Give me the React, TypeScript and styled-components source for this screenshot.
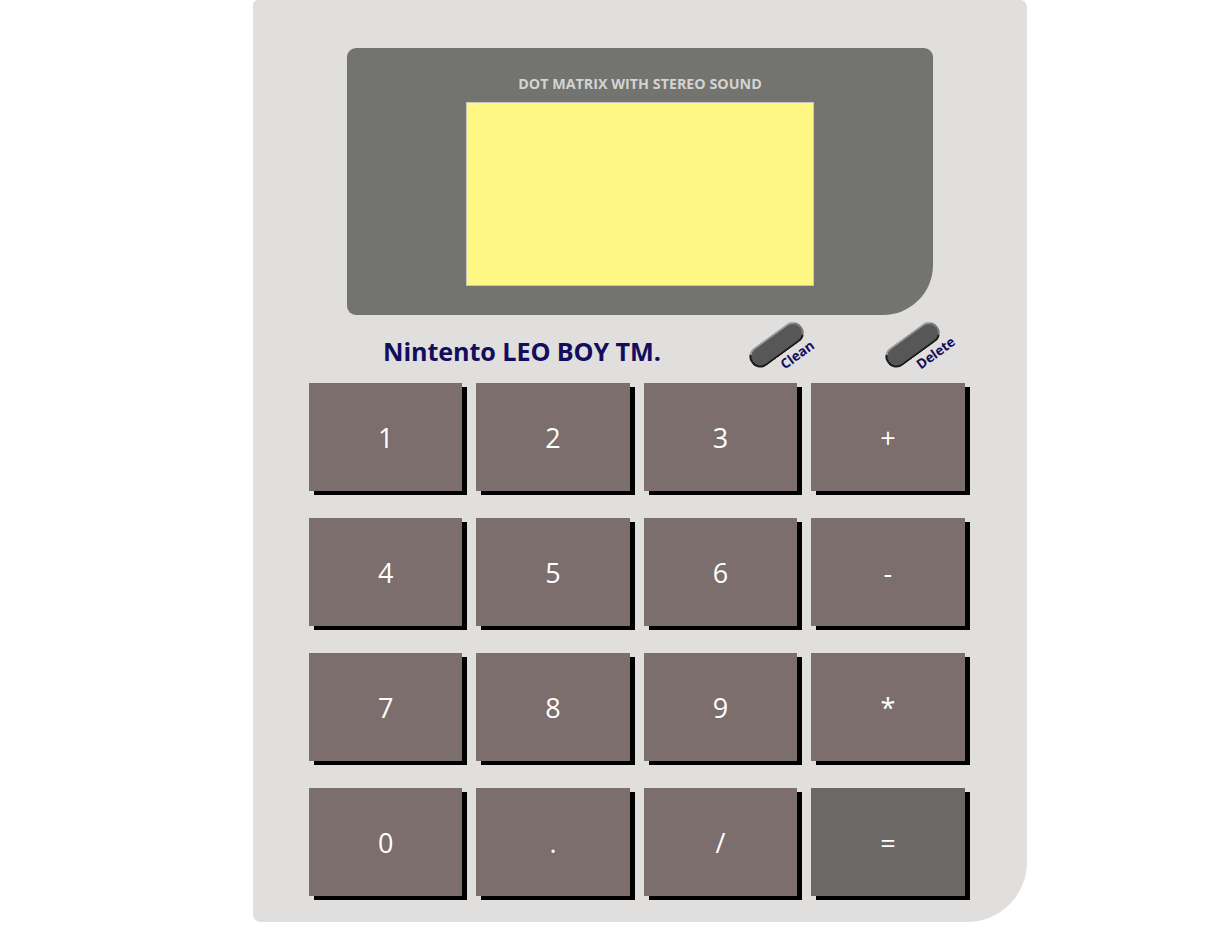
import React from "react";
import styled, { createGlobalStyle } from "styled-components";

const Global = createGlobalStyle`
  html, body { margin: 0; padding: 0; background: #ffffff; }
  body { font-family: "Open Sans", "DejaVu Sans", sans-serif; }
`;

const Device = styled.div`
  margin-left: 253px;
  width: 774px;
  height: 922px;
  box-sizing: border-box;
  background: #e0dfdd;
  border-radius: 5px 7px 60px 8px;
  padding-top: 48px;
  display: flex;
  flex-direction: column;
`;

const ScreenFrame = styled.div`
  margin-left: 94px;
  width: 586px;
  height: 267px;
  box-sizing: border-box;
  background: #737370;
  border-radius: 9px 9px 50px 9px;
  display: flex;
  flex-direction: column;
  align-items: center;
  padding-top: 27px;
`;

const ScreenTitle = styled.div`
  font-family: "Open Sans", sans-serif;
  font-weight: 700;
  font-size: 14.3px;
  line-height: 18px;
  color: #d3d3d1;
`;

const Lcd = styled.div`
  margin-top: 9px;
  width: 348px;
  height: 184px;
  box-sizing: border-box;
  background: #fef783;
  border: 1px solid #c9c7c0;
`;

const ControlRow = styled.div`
  height: 68px;
  display: flex;
  align-items: flex-start;
  padding-left: 130px;
`;

const Brand = styled.div`
  margin-top: 20px;
  font-family: "Open Sans", sans-serif;
  font-weight: 700;
  font-size: 25.2px;
  line-height: 32px;
  color: #130d5e;
  letter-spacing: -0.1px;
  width: 362px;
`;

const Switch = styled.div<{ $gap: number }>`
  margin-top: 19px;
  margin-left: ${(p) => p.$gap}px;
  display: flex;
  flex-direction: column;
  align-items: flex-start;
  transform: rotate(-36deg);
  transform-origin: 31px 10px;
`;

const Pill = styled.div`
  width: 58px;
  height: 18px;
  background: #575757;
  border: 2px solid #1c1c1c;
  border-top-color: #9a9a9a;
  border-right-color: #7a7a7a;
  border-radius: 11px;
`;

const SwitchLabel = styled.div<{ $shift: number }>`
  margin-top: 2px;
  margin-left: ${(p) => p.$shift}px;
  font-family: "Open Sans", sans-serif;
  font-weight: 700;
  font-size: 13.5px;
  line-height: 15px;
  color: #130d5e;
`;

const Keypad = styled.div`
  margin-left: 56px;
  display: grid;
  grid-template-columns: repeat(4, 153.4px);
  grid-auto-rows: 108px;
  column-gap: 14px;
  row-gap: 27px;
`;

const Key = styled.button<{ $dark?: boolean }>`
  border: none;
  margin: 0;
  padding: 0;
  background: ${(p) => (p.$dark ? "#6b6866" : "#7b6e6d")};
  box-shadow: 5px 4px 0 #000000;
  color: #ffffff;
  font-family: "Open Sans", sans-serif;
  font-size: 27px;
  font-weight: 400;
  display: flex;
  align-items: center;
  justify-content: center;
  cursor: pointer;
`;

const keys = ["1", "2", "3", "+", "4", "5", "6", "-", "7", "8", "9", "*", "0", ".", "/", "="];

export default function App() {
  return (
    <>
      <Global />
      <Device>
        <ScreenFrame>
          <ScreenTitle>DOT MATRIX WITH STEREO SOUND</ScreenTitle>
          <Lcd />
        </ScreenFrame>
        <ControlRow>
          <Brand>Nintento LEO BOY TM.</Brand>
          <Switch $gap={0}>
            <Pill />
            <SwitchLabel $shift={23}>Clean</SwitchLabel>
          </Switch>
          <Switch $gap={74}>
            <Pill />
            <SwitchLabel $shift={23}>Delete</SwitchLabel>
          </Switch>
        </ControlRow>
        <Keypad>
          {keys.map((k) => (
            <Key key={k} $dark={k === "="}>
              {k}
            </Key>
          ))}
        </Keypad>
      </Device>
    </>
  );
}
